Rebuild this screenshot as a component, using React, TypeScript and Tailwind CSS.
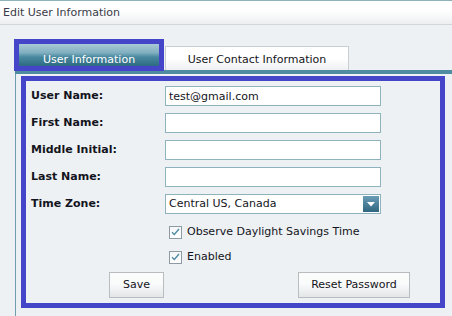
import { useState } from "react";

const font = "font-['DejaVu_Sans',Tahoma,sans-serif]";

function Field({ label, value }: { label: string; value?: string }) {
  return (
    <div className="flex h-[20px] items-center">
      <div className="w-[134px] text-[11px] font-bold text-[#141420]">{label}</div>
      <input
        readOnly
        value={value ?? ""}
        className="h-[20px] w-[216px] border border-[#8fb3bc] bg-white px-[3px] pt-px text-[11px] text-[#141420] outline-none"
      />
    </div>
  );
}

function Check({ label, checked }: { label: string; checked: boolean }) {
  return (
    <div className="flex h-[20px] items-center pl-[138px]">
      <span className="flex h-[13px] w-[13px] items-center justify-center border border-[#8d9ba3] bg-[linear-gradient(to_bottom,#f4f6f7,#ffffff)]">
        {checked && (
          <svg width="9" height="8" viewBox="0 0 9 8">
            <path d="M1 4.2 L3.3 6.5 L8 1" fill="none" stroke="#4a8aa6" strokeWidth="1.3" />
          </svg>
        )}
      </span>
      <span className="ml-[5px] text-[11px] text-[#141420]">{label}</span>
    </div>
  );
}

export default function App() {
  const [tab, setTab] = useState(0);

  return (
    <div className={`h-[316px] w-[452px] overflow-hidden bg-[#edf1f4] ${font}`}>
      <div className="flex h-[25px] items-center border-t border-b border-t-[#8fb2bb] border-b-[#d2d6d9] bg-[linear-gradient(to_bottom,#ffffff_40%,#eceff1)] pl-[3px] pt-px text-[11px] text-[#3a3a48]">
        Edit User Information
      </div>

      <div className="ml-[14px] mt-[14px] flex h-[31px] items-end">
        <div className="relative z-10 -mb-px h-[32px] w-[150px] border-[5px] border-[#4545c9]">
          <button
            onClick={() => setTab(0)}
            className="flex h-full w-full items-end justify-center bg-[linear-gradient(to_bottom,#a9cad6,#80afc0_40%,#4a8aa0_58%,#2d6a82)] text-[11px] leading-[13px] text-white"
          >
            User Information
          </button>
        </div>
        <button
          onClick={() => setTab(1)}
          className="ml-px flex h-[24px] w-[184px] items-center justify-center border border-b-0 border-[#c9ced2] bg-[linear-gradient(to_bottom,#ffffff_50%,#eef0f2)] pt-[3px] text-[11px] text-[#141420]"
        >
          User Contact Information
        </button>
      </div>

      <div className="ml-[15px] h-[4px] bg-[#4f8ba1]" />

      <div className="ml-[15px] h-[250px] border-l border-[#6e9dad] pl-[5px] pt-[2px]">
        <div className="flex h-[232px] w-[424px] flex-col border-[5px] border-[#4545c9] pl-[5px] pt-[5px]">
          <div className="flex flex-col gap-[7px]">
            <Field label="User Name:" value={tab === 0 ? "test@gmail.com" : "test@gmail.com"} />
            <Field label="First Name:" />
            <Field label="Middle Initial:" />
            <Field label="Last Name:" />
            <div className="flex h-[20px] items-center">
              <div className="w-[134px] text-[11px] font-bold text-[#141420]">Time Zone:</div>
              <div className="flex h-[20px] w-[216px] items-center justify-between border border-[#8fb3bc] bg-white pl-[3px] pr-px">
                <span className="pt-px text-[11px] text-[#141420]">Central US, Canada</span>
                <span className="flex h-[16px] w-[16px] items-center justify-center bg-[linear-gradient(to_bottom,#6a9cb5,#2f6580)]">
                  <svg width="8" height="5" viewBox="0 0 8 5">
                    <path d="M0 0 H8 L4 4.5 Z" fill="#ffffff" />
                  </svg>
                </span>
              </div>
            </div>
          </div>

          <div className="mt-[8px] flex flex-col gap-[5px]">
            <Check label="Observe Daylight Savings Time" checked />
            <Check label="Enabled" checked />
          </div>

          <div className="mt-[5px] flex">
            <button className="ml-[78px] h-[26px] w-[55px] border border-[#b9bdc0] bg-[linear-gradient(to_bottom,#fafbfb_45%,#e3e6e8)] text-[11px] text-[#141420]">
              Save
            </button>
            <button className="ml-[134px] h-[26px] w-[112px] border border-[#b9bdc0] bg-[linear-gradient(to_bottom,#fafbfb_45%,#e3e6e8)] text-[11px] text-[#141420]">
              Reset Password
            </button>
          </div>
        </div>
      </div>
    </div>
  );
}
